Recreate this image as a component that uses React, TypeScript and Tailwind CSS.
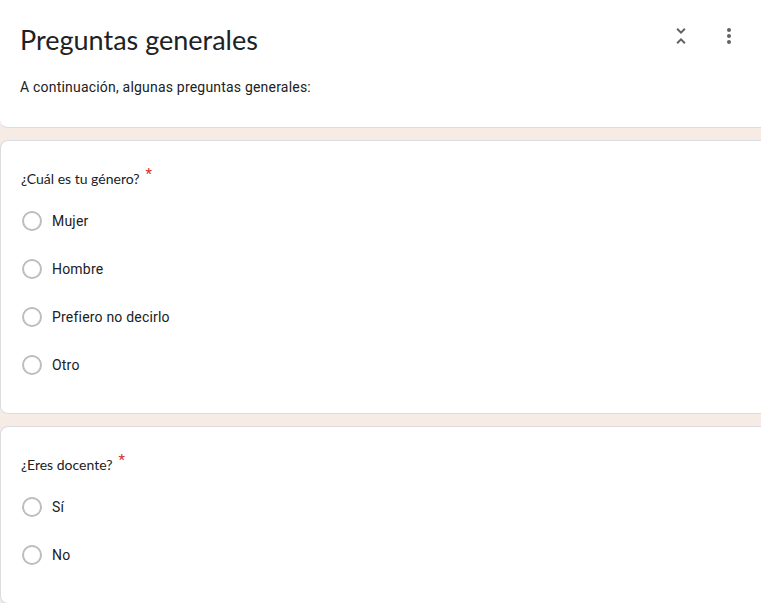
import React from "react";

const hand = { fontFamily: "Lato, 'Noto Sans', sans-serif" };
const roboto = { fontFamily: "Roboto, sans-serif" };

function Radio({ label }: { label: string }) {
  return (
    <div className="flex h-12 items-center">
      <div className="ml-[21px] h-5 w-5 rounded-full border-2 border-[#bdbdbd]" />
      <span className="ml-[10px] text-[14px] tracking-[0.2px] text-[#202124]" style={roboto}>
        {label}
      </span>
    </div>
  );
}

function Question({ title, options }: { title: string; options: string[] }) {
  return (
    <div className="rounded-l-lg border-y border-l border-[#dadce0] bg-white pt-[25px] pb-[24px]">
      <div className="flex h-6 items-center pl-5">
        <span className="text-[14px] text-[#202124]" style={hand}>
          {title}
        </span>
        <span className="ml-[6px] -mt-2 text-[15px] text-[#d93025]" style={roboto}>
          *
        </span>
      </div>
      <div className="mt-[7px]">
        {options.map((o) => (
          <Radio key={o} label={o} />
        ))}
      </div>
    </div>
  );
}

export default function App() {
  return (
    <div className="flex min-h-[603px] w-[761px] flex-col gap-3 overflow-hidden bg-[#f6ebe5]">
      <div className="relative h-[128px] rounded-bl-lg border-b border-[#dadce0] bg-white pl-5 pt-[20px]">
        <h1 className="text-[27px] leading-[40px] text-[#202124]" style={hand}>
          Preguntas generales
        </h1>
        <p className="mt-[17px] text-[14px] leading-5 tracking-[0.2px] text-[#202124]" style={roboto}>
          A continuación, algunas preguntas generales:
        </p>
        <div className="absolute right-[20px] top-[24px] flex items-center gap-6">
          <svg width="24" height="24" viewBox="0 0 24 24" fill="#5f6368">
            <path d="M7.41 18.59L8.83 20 12 16.83 15.17 20l1.41-1.41L12 14l-4.59 4.59zm9.18-13.18L15.17 4 12 7.17 8.83 4 7.41 5.41 12 10l4.59-4.59z" />
          </svg>
          <svg width="24" height="24" viewBox="0 0 24 24" fill="#5f6368">
            <path d="M12 8c1.1 0 2-.9 2-2s-.9-2-2-2-2 .9-2 2 .9 2 2 2zm0 2c-1.1 0-2 .9-2 2s.9 2 2 2 2-.9 2-2-.9-2-2-2zm0 6c-1.1 0-2 .9-2 2s.9 2 2 2 2-.9 2-2-.9-2-2-2z" />
          </svg>
        </div>
      </div>
      <Question title="¿Cuál es tu género?" options={["Mujer", "Hombre", "Prefiero no decirlo", "Otro"]} />
      <Question title="¿Eres docente?" options={["Sí", "No"]} />
    </div>
  );
}
